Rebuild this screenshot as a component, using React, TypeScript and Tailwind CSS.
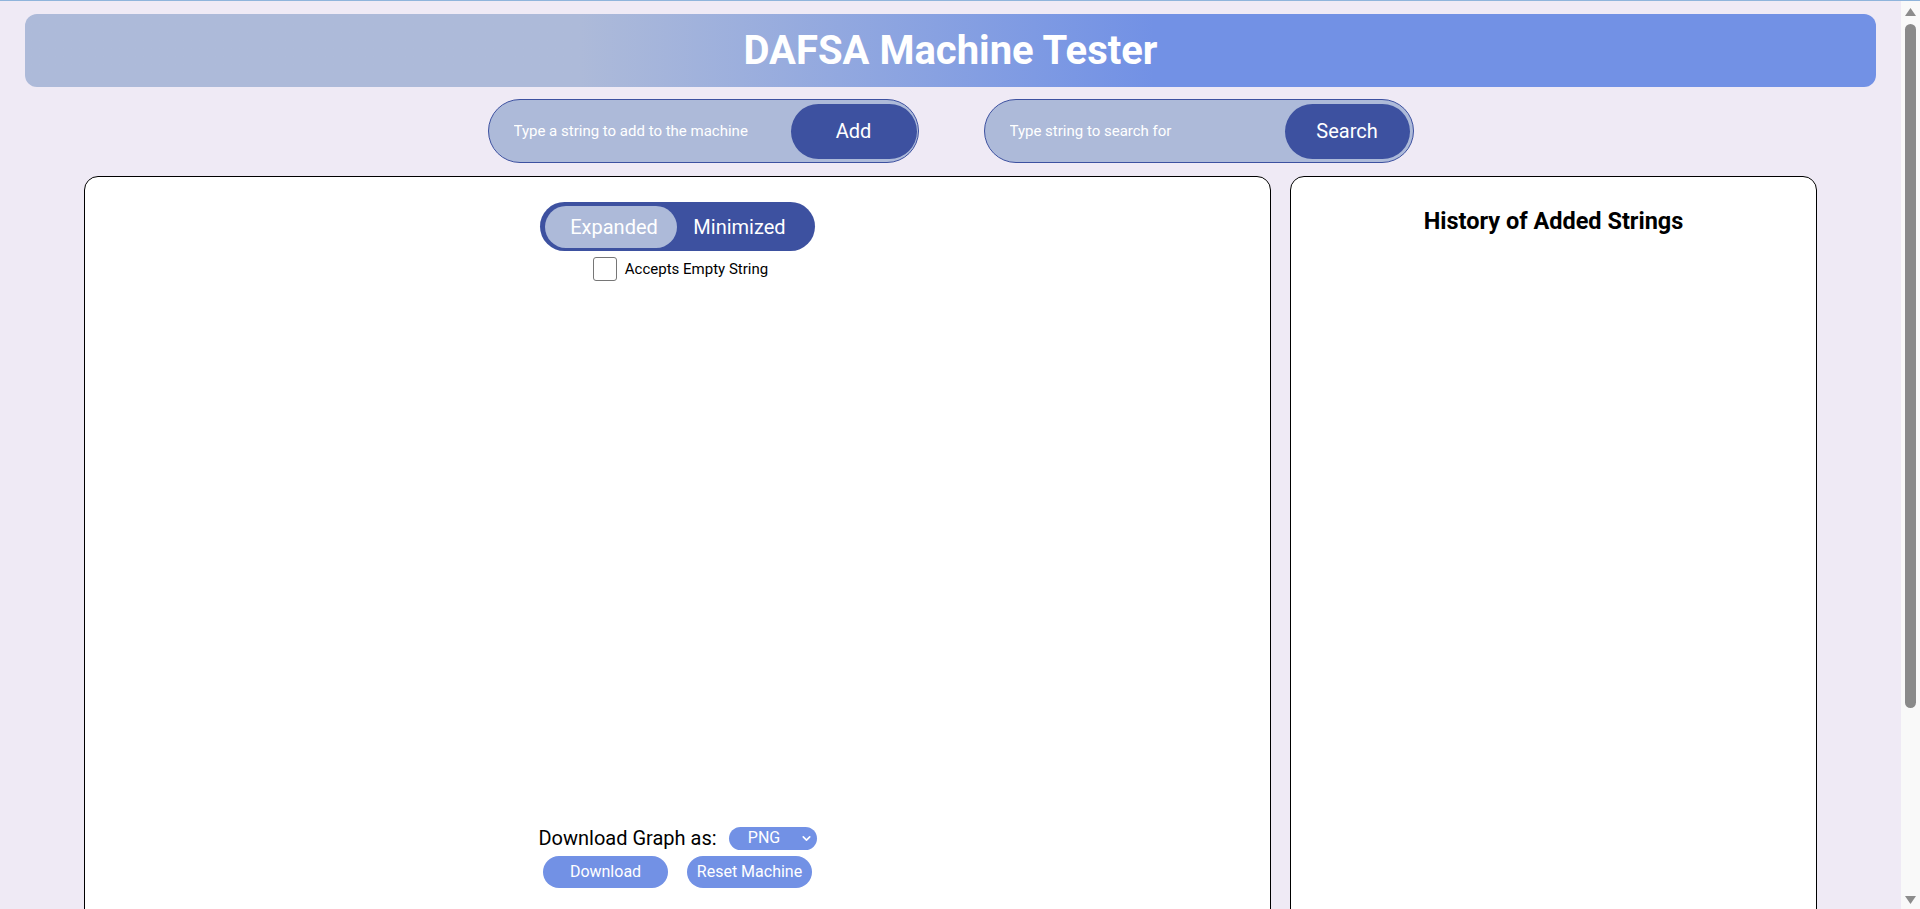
import { ChevronDown } from "lucide-react";

function FakeScrollbar() {
  return (
    <aside className="fixed right-0 top-[1px] flex h-[908px] w-[19px] flex-col items-center bg-[#f9f9f9]">
      <svg width="11" height="8" viewBox="0 0 11 8" className="mt-[7px]">
        <polygon points="5.5,0 11,8 0,8" fill="#8c8c8c" />
      </svg>
      <div className="mt-[8px] h-[684px] w-[11px] rounded-full bg-[#8a8a8a]" />
      <div className="flex-1" />
      <svg width="11" height="8" viewBox="0 0 11 8" className="mb-[5px]">
        <polygon points="0,0 11,0 5.5,8" fill="#8c8c8c" />
      </svg>
    </aside>
  );
}

export default function App() {
  return (
    <div className="min-h-screen border-t border-[#8fb4db] bg-[#efeaf5] font-['Roboto',sans-serif]">
      <div className="w-[1901px] pb-[25px]">
        {/* Header */}
        <header className="mx-[25px] mt-[13px] flex h-[73px] items-center justify-center rounded-[12px] bg-linear-to-r from-[#adbad9] from-30% to-[#7291e5] to-61%">
          <h1 className="text-[40px] font-bold text-white">DAFSA Machine Tester</h1>
        </header>

        {/* Inputs */}
        <div className="mt-[12px] flex justify-center gap-[65px]">
          <div className="flex h-[64px] w-[431px] items-center rounded-full border border-[#3d51a0] bg-[#adbad9] pl-[25px] pr-[1px]">
            <input
              className="min-w-0 flex-1 bg-transparent text-[15px] text-white outline-none placeholder:text-white"
              placeholder="Type a string to add to the machine"
            />
            <button className="h-[55px] w-[126px] rounded-full bg-[#3d51a0] text-[20px] text-white">
              Add
            </button>
          </div>

          <div className="flex h-[64px] w-[430px] items-center rounded-full border border-[#3d51a0] bg-[#adbad9] pl-[25px] pr-[3px]">
            <input
              className="min-w-0 flex-1 bg-transparent text-[15px] text-white outline-none placeholder:text-white"
              placeholder="Type string to search for"
            />
            <button className="h-[55px] w-[125px] rounded-full bg-[#3d51a0] text-[20px] text-white">
              Search
            </button>
          </div>
        </div>

        {/* Panels */}
        <div className="mt-[13px] flex justify-center gap-[19px]">
          {/* Graph panel */}
          <section className="flex h-[950px] w-[1187px] flex-col items-center rounded-[14px] border border-black bg-white pt-[25px]">
            <div className="flex h-[49px] w-[275px] items-center rounded-full bg-[#3d51a0] px-[5px]">
              <div className="flex h-[42px] w-[132px] items-center justify-center rounded-full bg-[#adbad9] pl-[6px] text-[20px] text-white">
                Expanded
              </div>
              <div className="flex-1 pr-[8px] text-center text-[20px] text-white">Minimized</div>
            </div>

            <label className="ml-[6px] mt-[6px] flex items-center gap-[8px]">
              <span className="h-[24px] w-[24px] rounded-[3px] border border-[#767676] bg-white" />
              <span className="text-[15px] text-black">Accepts Empty String</span>
            </label>

            <div className="h-[545px] w-full" />

            <div className="flex h-[24px] items-center gap-[12px]">
              <span className="text-[20px] text-black">Download Graph as:</span>
              <div className="flex h-[23px] w-[88px] items-center rounded-full bg-[#7291e5] text-white">
                <span className="flex-1 text-center text-[16px]">PNG</span>
                <ChevronDown size={13} strokeWidth={3} className="mr-[4px]" />
              </div>
            </div>

            <div className="mt-[6px] flex gap-[19px]">
              <button className="h-[32px] w-[125px] rounded-full bg-[#7291e5] text-[16px] text-white">
                Download
              </button>
              <button className="h-[32px] w-[125px] rounded-full bg-[#7291e5] text-[16px] text-white">
                Reset Machine
              </button>
            </div>
          </section>

          {/* History panel */}
          <section className="h-[950px] w-[527px] rounded-[14px] border border-black bg-white pt-[27px]">
            <h2 className="text-center text-[23.5px] font-bold text-black">History of Added Strings</h2>
          </section>
        </div>
      </div>

      <FakeScrollbar />
    </div>
  );
}
